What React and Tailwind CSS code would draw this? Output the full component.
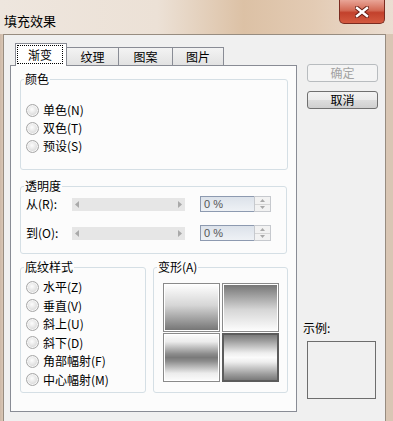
import React from "react";

const CN = "font-['Noto_Sans_CJK_SC','Noto_Sans',sans-serif]";

const Radio = ({ text, k, h = "h-[18px]" }) => (
  <div className={`flex items-center ${h}`}>
    <span className="w-[13px] h-[13px] rounded-full border border-[#a7a7a7] bg-[radial-gradient(circle_at_45%_40%,#fdfdfd_0%,#e6e6e6_45%,#c6c6c6_100%)] shadow-[inset_0_0_0_1px_#f6f6f6]" />
    <span className="ml-[4px] text-[12px] leading-[14px] text-black">
      {text}({k})
    </span>
  </div>
);

const Arrow = ({ dir }) => (
  <svg width="4" height="7" viewBox="0 0 4 7">
    {dir === "left" ? <path d="M4 0 L0 3.5 L4 7 Z" fill="#a9a9a9" /> : <path d="M0 0 L4 3.5 L0 7 Z" fill="#a9a9a9" />}
  </svg>
);

const SliderRow = ({ label, k }) => (
  <div className="flex items-center h-[16px]">
    <span className="w-[47px] pl-[1px] text-[12px] leading-[14px] text-black">
      {label}({k}):
    </span>
    <div className="w-[113px] h-[13px] bg-[#e6e6e6] flex items-center justify-between px-[3px]">
      <Arrow dir="left" />
      <Arrow dir="right" />
    </div>
    <div className="ml-[15px] w-[54px] h-[16px] border border-[#8d9ab0] border-r-0 bg-[linear-gradient(to_bottom,#dce2ea,#eef1f5)] pl-[3px] text-[11px] leading-[14px] text-[#555] font-['Liberation_Sans',sans-serif]">
      0 %
    </div>
    <div className="w-[17px] h-[16px] border border-[#c6c9ce] bg-[#f2f2f2] flex flex-col">
      <div className="flex-1 flex items-center justify-center border-b border-[#d6d6d6]">
        <svg width="5" height="3" viewBox="0 0 5 3"><path d="M0 3 L2.5 0 L5 3 Z" fill="#a8a8a8" /></svg>
      </div>
      <div className="flex-1 flex items-center justify-center">
        <svg width="5" height="3" viewBox="0 0 5 3"><path d="M0 0 L2.5 3 L5 0 Z" fill="#a8a8a8" /></svg>
      </div>
    </div>
  </div>
);

const Legend = ({ children }) => (
  <legend className="ml-[3px] px-[1px] text-[12px] leading-[14px] text-black">{children}</legend>
);

const swatches = [
  "border border-[#8a8a8a] p-[1px] bg-white",
  "border border-[#8a8a8a] p-[1px] bg-white",
  "border border-[#8a8a8a] p-[1px] bg-white",
  "border-2 border-[#5c5c5c]",
];
const grads = [
  "bg-[linear-gradient(to_bottom,#fdfdfd_0%,#d6d6d6_45%,#767676_100%)]",
  "bg-[linear-gradient(to_bottom,#767676_0%,#d6d6d6_55%,#fbfbfb_100%)]",
  "bg-[linear-gradient(to_bottom,#fafafa_0%,#ececec_15%,#8c8c8c_42%,#7a7a7a_50%,#8c8c8c_58%,#ececec_85%,#fafafa_100%)]",
  "bg-[linear-gradient(to_bottom,#7a7a7a_0%,#9a9a9a_12%,#eeeeee_40%,#fbfbfb_50%,#eeeeee_60%,#9a9a9a_88%,#7a7a7a_100%)]",
];

export default function App() {
  return (
    <div className={`w-[393px] h-[421px] flex flex-col overflow-hidden bg-[#d7c4b2] ${CN}`}>
      {/* title bar */}
      <div className="h-[34px] flex items-start justify-between bg-[linear-gradient(90deg,#eee6de_0%,#ece1d6_40%,#dcc1a5_62%,#e3cbb4_80%,#ebded2_100%)]">
        <span className="pl-[4px] pt-[13px] text-[13px] leading-[16px] text-black">填充效果</span>
        <button className="mr-[8px] w-[46px] h-[24px] rounded-b-[5px] border border-t-0 border-[#7a2b20] bg-[linear-gradient(to_bottom,#e9a597_0%,#d36a55_45%,#c2412c_55%,#d45a40_100%)] flex items-center justify-center">
          <svg width="14" height="12" viewBox="0 0 14 12">
            <path d="M2 2 L12 10 M12 2 L2 10" stroke="#6b1e14" strokeWidth="4.4" strokeLinecap="square" />
            <path d="M2 2 L12 10 M12 2 L2 10" stroke="#ffffff" strokeWidth="2.4" strokeLinecap="square" />
          </svg>
        </button>
      </div>

      {/* frame + client */}
      <div className="flex-1 min-h-0 flex pl-[3px] pr-[7px] bg-[linear-gradient(90deg,#cdb9a8_0px,#d9c6b4_3px,#d9c6b4_100%)]">
        <div className="flex-1 flex bg-[#f0f0f0] border-l border-t border-r border-[#978c80]">
          {/* left: tab control */}
          <div className="pl-[6px] pt-[8px] flex flex-col">
            <div className="h-[22px] flex items-end pl-[5px] text-[12px] leading-[14px] text-black">
              <div className="relative z-10 self-start w-[52px] h-[23px] bg-white border border-b-0 border-[#898c95] pt-[1px] pl-[1px] pr-[3px] pb-[2px] flex">
                <div className="flex-1 border border-dotted border-black flex items-center justify-center">渐变</div>
              </div>
              <div className="w-[52px] h-[18px] border border-b-0 border-l-0 border-[#898c95] bg-[linear-gradient(to_bottom,#f3f3f3,#e2e2e2)] flex items-center justify-center">纹理</div>
              <div className="w-[54px] h-[18px] border border-b-0 border-l-0 border-[#898c95] bg-[linear-gradient(to_bottom,#f3f3f3,#e2e2e2)] flex items-center justify-center">图案</div>
              <div className="w-[51px] h-[18px] border border-b-0 border-l-0 border-[#898c95] bg-[linear-gradient(to_bottom,#f3f3f3,#e2e2e2)] flex items-center justify-center">图片</div>
            </div>
            <div className="w-[287px] h-[347px] border border-[#898c95] bg-[#fcfcfc] pl-[9px] pt-[6px] flex flex-col">
              <fieldset className="w-[268px] h-[98px] border border-[#d5dfe5] rounded-[3px]">
                <Legend>颜色</Legend>
                <div className="pl-[5px] pt-[15px]">
                  <Radio text="单色" k="N" />
                  <Radio text="双色" k="T" />
                  <Radio text="预设" k="S" />
                </div>
              </fieldset>

              <fieldset className="mt-[9px] w-[267px] h-[75px] border border-[#d5dfe5] rounded-[3px]">
                <Legend>透明度</Legend>
                <div className="pl-[4px] pt-[3px] flex flex-col gap-[13px]">
                  <SliderRow label="从" k="R" />
                  <SliderRow label="到" k="O" />
                </div>
              </fieldset>

              <div className="mt-[6px] flex gap-[7px]">
                <fieldset className="w-[126px] h-[133px] border border-[#d5dfe5] rounded-[3px]">
                  <Legend>底纹样式</Legend>
                  <div className="pl-[5px] pt-[4px]">
                    <Radio text="水平" k="Z" h="h-[18.5px]" />
                    <Radio text="垂直" k="V" h="h-[18.5px]" />
                    <Radio text="斜上" k="U" h="h-[18.5px]" />
                    <Radio text="斜下" k="D" h="h-[18.5px]" />
                    <Radio text="角部幅射" k="F" h="h-[18.5px]" />
                    <Radio text="中心幅射" k="M" h="h-[18.5px]" />
                  </div>
                </fieldset>
                <fieldset className="w-[135px] h-[133px] border border-[#d5dfe5] rounded-[3px]">
                  <Legend>变形(A)</Legend>
                  <div className="pl-[9px] pt-[9px] grid grid-cols-[57px_57px] grid-rows-[49px_49px] gap-x-[2px] gap-y-[1px]">
                    {swatches.map((s, i) => (
                      <div key={i} className={`${s} flex`}>
                        <div className={`flex-1 ${grads[i]}`} />
                      </div>
                    ))}
                  </div>
                </fieldset>
              </div>
            </div>
          </div>

          {/* right column */}
          <div className="pl-[6px] pt-[29px] flex flex-col text-[12px] leading-[14px]">
            <button className="ml-[4px] w-[71px] h-[18px] rounded-[3px] border border-[#b8bcbf] bg-[#f4f4f4] text-[#a3a3a3] flex items-center justify-center">确定</button>
            <button className="ml-[4px] mt-[9px] w-[71px] h-[18px] rounded-[3px] border border-[#707070] bg-[linear-gradient(to_bottom,#f3f3f3_0%,#ebebeb_50%,#dddddd_51%,#cfcfcf_100%)] text-black flex items-center justify-center">取消</button>
            <span className="mt-[212px] text-black">示例:</span>
            <div className="ml-[4px] mt-[6px] w-[69px] h-[58px] border border-[#6d6d6d] bg-[#f0f0f0]" />
          </div>
        </div>
      </div>
    </div>
  );
}
